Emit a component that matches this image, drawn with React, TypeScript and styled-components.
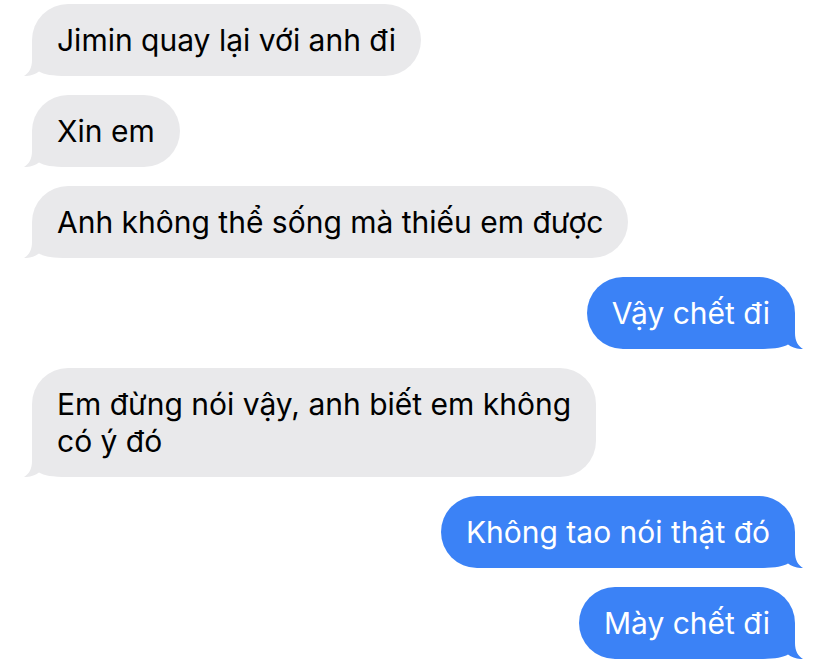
import React from "react";
import styled, { createGlobalStyle } from "styled-components";

const Global = createGlobalStyle`
  html, body { margin: 0; padding: 0; background: #ffffff; }
  body { font-family: Inter, "Noto Sans", "Liberation Sans", sans-serif; -webkit-font-smoothing: antialiased; }
`;

const GRAY = "#e9e9eb";
const BLUE = "#3b82f6";

const Thread = styled.div`
  width: 828px;
  height: 667px;
  box-sizing: border-box;
  padding: 4px 33px 0 32px;
  display: flex;
  flex-direction: column;
  gap: 19px;
  overflow: hidden;
`;

const Row = styled.div<{ $mine?: boolean }>`
  display: flex;
  justify-content: ${(p) => (p.$mine ? "flex-end" : "flex-start")};
`;

const Bubble = styled.div<{ $mine?: boolean }>`
  position: relative;
  max-width: 640px;
  box-sizing: border-box;
  padding: 17.5px 25px;
  border-radius: 36px;
  background: ${(p) => (p.$mine ? BLUE : GRAY)};
  color: ${(p) => (p.$mine ? "#ffffff" : "#000000")};
  font-size: 30px;
  line-height: 37px;
  letter-spacing: 0;
  white-space: pre-line;
`;

const Text = styled.span`
  position: relative;
`;

const TailSvg = styled.svg<{ $mine?: boolean }>`
  position: absolute;
  bottom: 0;
  width: 46px;
  height: 36px;
  ${(p) => (p.$mine ? "right: -8px; transform: scaleX(-1);" : "left: -8px;")}
`;

const Tail = ({ mine }: { mine?: boolean }) => (
  <TailSvg $mine={mine} viewBox="0 0 46 36" aria-hidden>
    <path
      d="M8 0 L8 20 C8 28 5 33 0 36 C6 36.3 11 34.5 15 31.5 C20 34.5 28 36 44 36 L44 0 Z"
      fill={mine ? BLUE : GRAY}
    />
  </TailSvg>
);

type Msg = { text: string; mine?: boolean };

const messages: Msg[] = [
  { text: "Jimin quay lại với anh đi" },
  { text: "Xin em" },
  { text: "Anh không thể sống mà thiếu em được" },
  { text: "Vậy chết đi", mine: true },
  { text: "Em đừng nói vậy, anh biết em không\ncó ý đó" },
  { text: "Không tao nói thật đó", mine: true },
  { text: "Mày chết đi", mine: true },
];

export default function App() {
  return (
    <>
      <Global />
      <Thread>
        {messages.map((m, i) => (
          <Row key={i} $mine={m.mine}>
            <Bubble $mine={m.mine}>
              <Tail mine={m.mine} />
              <Text>{m.text}</Text>
            </Bubble>
          </Row>
        ))}
      </Thread>
    </>
  );
}
